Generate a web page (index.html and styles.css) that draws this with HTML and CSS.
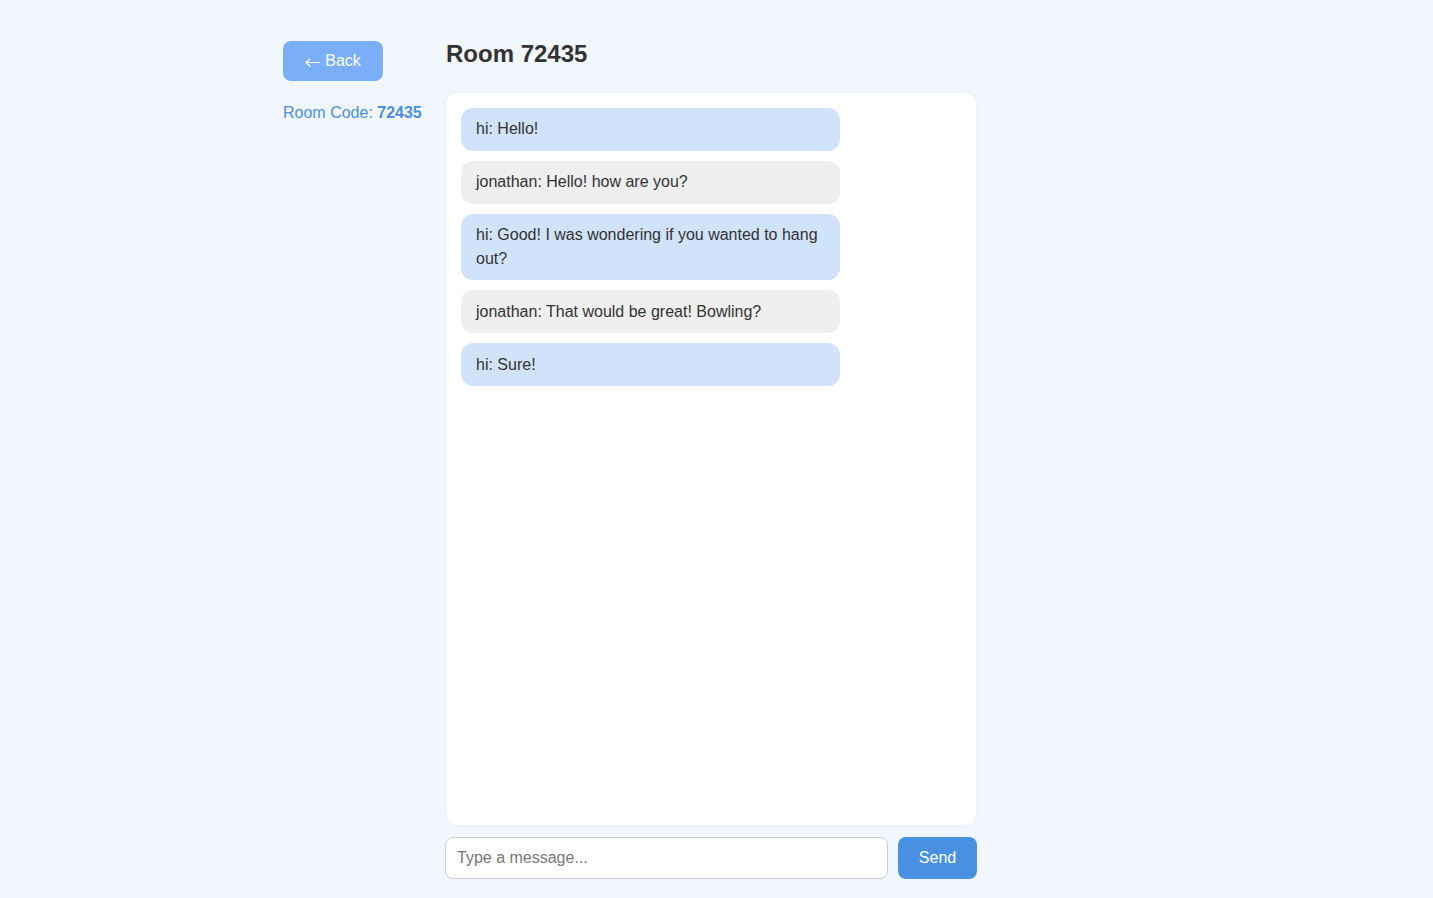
FILE: index.html
```html
<!DOCTYPE html>
<html>
<head>
<meta charset="utf-8">
<link rel="stylesheet" href="styles.css">
</head>
<body>
<div class="page">
  <aside class="sidebar">
    <button class="back-btn"><svg class="arrow" width="15" height="9" viewBox="0 0 15 9" aria-hidden="true"><path d="M1 4.5H14.5M1 4.5L4.8 1M1 4.5L4.8 8" fill="none" stroke="#fff" stroke-width="1.2" stroke-linecap="round"/></svg><span>Back</span></button>
    <div class="room-code">Room Code: <strong>72435</strong></div>
  </aside>
  <main class="chat">
    <h1 class="title">Room 72435</h1>
    <div class="panel">
      <div class="msg mine">hi: Hello!</div>
      <div class="msg other">jonathan: Hello! how are you?</div>
      <div class="msg mine">hi: Good! I was wondering if you wanted to hang out?</div>
      <div class="msg other">jonathan: That would be great! Bowling?</div>
      <div class="msg mine">hi: Sure!</div>
    </div>
    <div class="composer">
      <input class="input" type="text" placeholder="Type a message...">
      <button class="send-btn">Send</button>
    </div>
  </main>
</div>
</body>
</html>
```
FILE: styles.css
```css
* { box-sizing: border-box; }
html, body {
  margin: 0;
  padding: 0;
  background: #f2f6fe;
  font-family: "Liberation Sans", Arial, sans-serif;
  color: #333;
}
.page {
  display: flex;
  padding: 41px 0 0 283px;
  height: 898px;
}
.sidebar {
  width: 162px;
  display: flex;
  flex-direction: column;
  align-items: flex-start;
}
.back-btn {
  width: 100px;
  height: 40px;
  border: none;
  border-radius: 8px;
  background: #7aaff8;
  color: #fff;
  font-family: inherit;
  font-size: 16px;
  padding: 0;
  display: flex;
  align-items: center;
  justify-content: center;
  gap: 5px;
}
.arrow { display: block; margin-top: 3px; }
.room-code {
  margin-top: 23px;
  font-size: 16px;
  line-height: 18px;
  color: #4a90e2;
  white-space: nowrap;
}
.room-code strong { font-weight: bold; }
.chat {
  width: 532px;
  display: flex;
  flex-direction: column;
  margin-top: -1px;
}
.title {
  margin: 0 0 25px 1px;
  font-size: 24px;
  line-height: 28px;
  font-weight: bold;
  color: #333;
}
.panel {
  margin: 0 1px;
  height: 732px;
  background: #fff;
  border-radius: 12px;
  box-shadow: 0 0 6px rgba(0, 0, 0, 0.04);
  padding: 15px;
  display: flex;
  flex-direction: column;
  gap: 10px;
}
.msg {
  width: 379px;
  padding: 9.4px 15px;
  border-radius: 12px;
  font-size: 16px;
  line-height: 24px;
  color: #333;
}
.mine { background: #d1e3fa; }
.other { background: #efefef; }
.composer {
  display: flex;
  gap: 10px;
  margin-top: 12px;
}
.input {
  flex: 1;
  height: 42px;
  border: 1px solid #ccc;
  border-radius: 8px;
  padding: 0 11px;
  font-family: inherit;
  font-size: 16px;
  color: #333;
  background: #fff;
}
.input::placeholder { color: #777; }
.send-btn {
  width: 79px;
  height: 42px;
  border: none;
  border-radius: 8px;
  background: #4a90e2;
  color: #fff;
  font-family: inherit;
  font-size: 16px;
  padding: 0;
}
```
